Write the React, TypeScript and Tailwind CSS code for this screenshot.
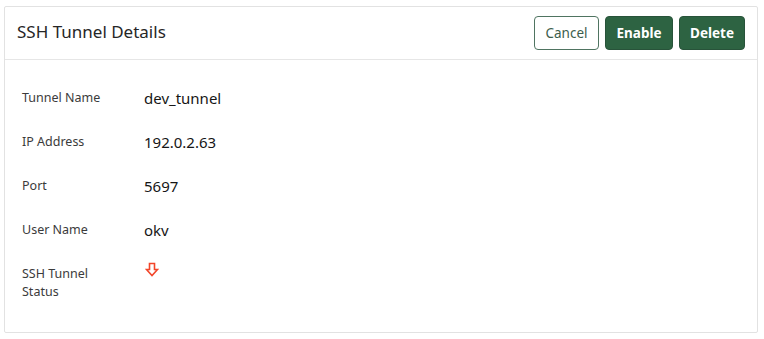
export default function App() {
  const rows: { label: string; value?: string }[] = [
    { label: 'Tunnel Name', value: 'dev_tunnel' },
    { label: 'IP Address', value: '192.0.2.63' },
    { label: 'Port', value: '5697' },
    { label: 'User Name', value: 'okv' },
  ];

  return (
    <div
      className="min-h-screen bg-white pl-[4px] pr-[6px] pt-[6px]"
      style={{ fontFamily: '"Noto Sans", "Open Sans", sans-serif' }}
    >
      <div className="h-[327px] rounded-[2px] border border-[#e2e2e2] bg-white">
        {/* Header */}
        <div className="flex h-[53px] items-center justify-between border-b border-[#e6e6e6] pl-[12px] pr-[12px]">
          <h1 className="-mt-[3px] text-[17px] text-[#262626]">SSH Tunnel Details</h1>
          <div className="flex gap-[6px]">
            <button
              type="button"
              className="h-[34px] w-[65px] rounded-[4px] border border-[#4f7461] bg-white text-[13.5px] text-[#3c5d4c]"
            >
              Cancel
            </button>
            <button
              type="button"
              className="h-[34px] w-[68px] rounded-[4px] border border-[#28533a] bg-[#2d6342] text-[13.5px] font-bold text-white"
            >
              Enable
            </button>
            <button
              type="button"
              className="h-[34px] w-[66px] rounded-[4px] border border-[#28533a] bg-[#2d6342] text-[13.5px] font-bold text-white"
            >
              Delete
            </button>
          </div>
        </div>

        {/* Details */}
        <div className="pl-[17px] pt-[29px]">
          {rows.map((r) => (
            <div key={r.label} className="flex h-[44px] items-start">
              <div className="w-[122px] text-[12.5px] leading-[18px] text-[#3b3b3b]">{r.label}</div>
              <div className="text-[15px] leading-[18px] text-[#161616]">{r.value}</div>
            </div>
          ))}
          <div className="flex items-start">
            <div className="w-[122px] text-[12.5px] leading-[18px] text-[#3b3b3b]">
              SSH Tunnel
              <br />
              Status
            </div>
            <svg width="14" height="15" viewBox="0 0 14 15" className="-mt-[3px] ml-[1px]">
              <path
                d="M4.5 1.5 H9.5 V7.5 H12.5 L7 13.5 L1.5 7.5 H4.5 Z"
                fill="none"
                stroke="#f2462a"
                strokeWidth="1.6"
                strokeLinejoin="miter"
              />
            </svg>
          </div>
        </div>
      </div>
    </div>
  );
}
